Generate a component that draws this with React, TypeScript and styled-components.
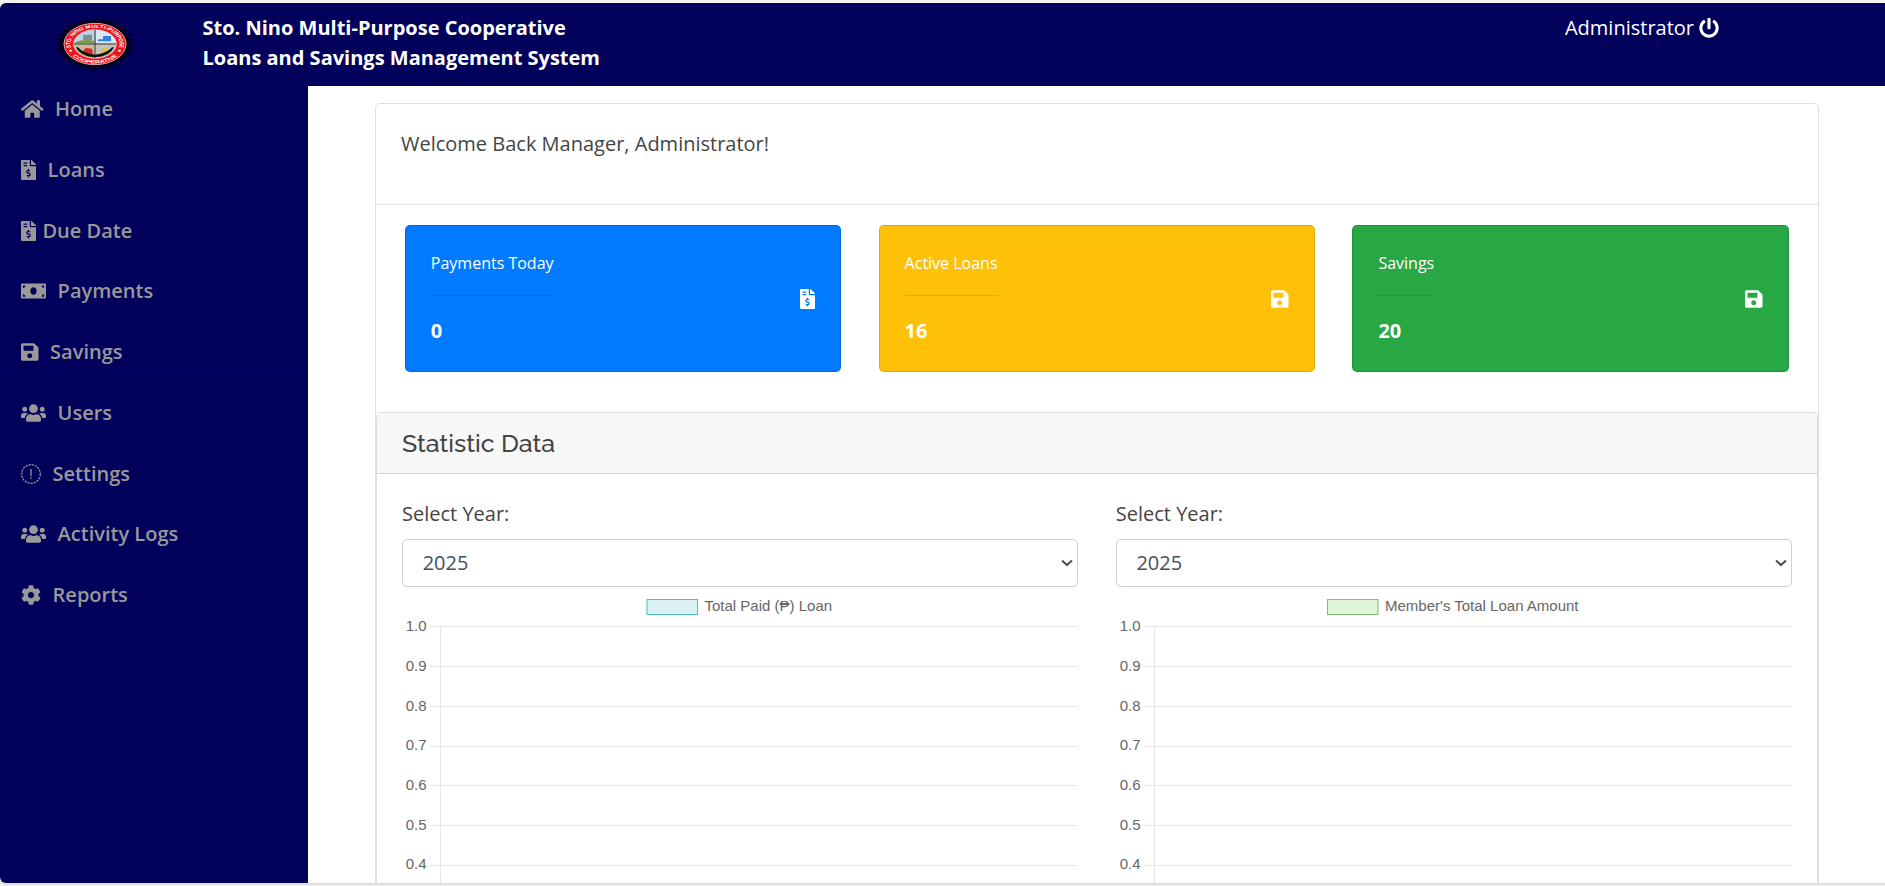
import React from "react";
import styled, { createGlobalStyle } from "styled-components";
import {
  FaHome,
  FaFileInvoiceDollar,
  FaMoneyBill,
  FaSave,
  FaUsers,
  FaCog,
  FaPowerOff,
} from "react-icons/fa";

const GlobalStyle = createGlobalStyle`
  *, *::before, *::after { box-sizing: border-box; }
  body {
    margin: 0;
    background: #f3f3f3;
    color: #444;
    font-family: "Open Sans", sans-serif;
    font-size: 20px;
    line-height: 30px;
  }
`;

const navy = "#01015c";

const Frame = styled.div`
  display: flex;
  height: 886px;
  padding: 3px 0;
  overflow: hidden;
  background: #f3f3f3;
`;

const Window = styled.div`
  display: flex;
  flex-direction: column;
  flex: 1;
  height: 880px;
  overflow: hidden;
  background: #fff;
  border-radius: 6px 0 0 6px;
  box-shadow: 0 1px 1px 1px #dedede;
`;

const TopBar = styled.header`
  display: flex;
  flex: none;
  height: 83px;
  padding-left: 57px;
  background: ${navy};
  color: #fff;
`;

const LogoSlot = styled.div`
  width: 145.5px;
  padding-top: 15px;
`;

const Brand = styled.h1`
  flex: 1;
  margin: 0;
  padding-top: 10px;
  font-size: 20px;
  line-height: 30px;
  font-weight: 700;
`;

const Account = styled.div`
  display: flex;
  align-items: center;
  gap: 5px;
  height: 30px;
  margin: 10px 166px 0 0;
`;

const Body = styled.div`
  display: flex;
  flex: 1;
  min-height: 0;
`;

const Sidebar = styled.nav`
  width: 308px;
  flex: none;
  background: ${navy};
`;

const NavItem = styled.a<{ $gap?: number }>`
  display: flex;
  align-items: center;
  gap: ${(p) => p.$gap ?? 11.6}px;
  height: 60.75px;
  padding-left: 21px;
  border-bottom: 1px solid #000052;
  color: #999;
  font-weight: 600;

  &:first-child { margin-top: -6.7px; }
  &:last-child { border-bottom-color: transparent; }
`;

const Main = styled.main`
  flex: 1;
  padding: 17px 66px 0 67px;
`;

const Panel = styled.section`
  height: 900px;
  border: 1px solid #dfdfdf;
  border-radius: 5px;
`;

const Welcome = styled.div`
  height: 101px;
  padding: 25px 25px 0;
  border-bottom: 1px solid #dfdfdf;
`;

const StatRow = styled.div`
  display: grid;
  grid-template-columns: repeat(3, 1fr);
  gap: 37.5px;
  padding: 20px 29.3px 40px 28.8px;
`;

const StatCard = styled.div<{ $color: string }>`
  display: flex;
  align-items: center;
  justify-content: space-between;
  height: 147px;
  padding: 0 25px;
  border: 1px solid rgba(0, 0, 0, 0.125);
  border-radius: 5px;
  background: ${(p) => p.$color};
  background-clip: border-box;
  color: #fff;
`;

const StatTitle = styled.div`
  padding-bottom: 20px;
  border-bottom: 1px solid rgba(0, 0, 0, 0.1);
  font-size: 16px;
  line-height: 24px;
`;

const StatValue = styled.div`
  padding-top: 20px;
  font-weight: 700;
`;

const StatisticCard = styled.section`
  height: 700px;
  border: 1px solid #dfdfdf;
  border-radius: 5px;
  overflow: hidden;
`;

const StatisticHeader = styled.h2`
  height: 61px;
  margin: 0;
  padding: 15px 25px;
  background: #f7f7f7;
  border-bottom: 1px solid #d6d6d6;
  font-family: Raleway, Lato, sans-serif;
  font-size: 25px;
  line-height: 30px;
  font-weight: 500;
`;

const ChartRow = styled.div`
  display: grid;
  grid-template-columns: 1fr 1fr;
  gap: 37.5px;
  padding: 25px 25px 0;
`;

const FieldLabel = styled.label`
  display: block;
  height: 40px;
`;

const SelectBox = styled.div`
  display: flex;
  align-items: center;
  justify-content: space-between;
  height: 48px;
  padding: 0 4px 0 19.7px;
  border: 1px solid #ced0da;
  border-radius: 5px;
  color: #495057;
`;

const Chart = styled.svg`
  display: block;
  width: 676px;
  height: 300px;
  font-family: "Liberation Sans", Arial, sans-serif;
  font-size: 15px;
  fill: #666;
`;

const DashedAlert = () => (
  <svg width="20" height="20" viewBox="0 0 20 20" fill="none" stroke="currentColor">
    <circle cx="10" cy="10" r="9.3" strokeWidth="1.2" strokeDasharray="2.2 0.95" />
    <path d="M10 5v7.2M10 13.6v1.5" strokeWidth="1.3" />
  </svg>
);

const Chevron = () => (
  <svg width="12" height="8" viewBox="0 0 12 8" fill="none" stroke="#495057" strokeWidth="2">
    <path d="M1 1.5l5 4.6 5-4.6" />
  </svg>
);

const teeth = Array.from({ length: 32 }, (_, i) => (i * 360) / 32);

const Seal = () => (
  <svg width="76" height="52" viewBox="-38 -26 76 52">
    <g transform="scale(1 .667)">
      <circle r="33.6" fill="#030308" />
      {teeth.map((a) => (
        <rect key={a} x="-1.6" y="-38" width="3.2" height="6" fill="#030308" transform={`rotate(${a})`} />
      ))}
      <circle r="31" fill="#f0141c" stroke="#f7dada" strokeWidth="0.9" />
      <circle r="21.4" fill="#c9cfbe" stroke="#f3c9c9" strokeWidth="0.8" />
      <path d="M-21 -1A21 21 0 0 1 -1 -21V-1Z" fill="#b9d3ea" />
      <path d="M-12 -14h9v8h-9Z" fill="#7e8f93" />
      <path d="M-21 -1c4-5 13-6 20-4v4Z" fill="#7f9a4a" />
      <path d="M1 -21A21 21 0 0 1 21 -1H1Z" fill="#dbe8f5" />
      <path d="M3 -7h5v-5h8v8H3Z" fill="#2f7fe0" />
      <path d="M-21 1H-1V21A21 21 0 0 1 -21 1Z" fill="#c6bb94" />
      <path d="M-9 6l6 1 1 8-7 2-4-5Z" fill="#d8262c" />
      <path d="M1 1H21A21 21 0 0 1 1 21Z" fill="#c4c4bc" />
      <path d="M8 6l5 1 3 6-8 2-2-4Z" fill="#dfc040" />
      <path d="M-19 5q4 14 19 15q15-1 19-15l-2 0q-5 9-17 11q-12-2-17-11Z" fill="#101010" />
      <path d="M-21 0H21M0 -21V21" stroke="#151515" strokeWidth="1" />
      <path id="sealTop" d="M-23.3 8A24.6 24.6 0 1 1 23.3 8" fill="none" />
      <path id="sealBottom" d="M-26 13A29 29 0 0 0 26 13" fill="none" />
      <g fill="#fff" fontFamily="Liberation Sans, sans-serif" fontWeight="700" textAnchor="middle">
        <text fontSize="6.2">
          <textPath href="#sealTop" startOffset="50%" textLength="88" lengthAdjust="spacingAndGlyphs">
            STO. NINO MULTI-PURPOSE
          </textPath>
        </text>
        <text fontSize="6.6">
          <textPath href="#sealBottom" startOffset="50%" textLength="52" lengthAdjust="spacingAndGlyphs">
            COOPERATIVE
          </textPath>
        </text>
      </g>
      <circle cx="-24.5" cy="10" r="1.5" fill="#fff" />
      <circle cx="24.5" cy="10" r="1.5" fill="#fff" />
    </g>
  </svg>
);

const HomeIcon = styled(FaHome)`width: 22.5px; height: 20px;`;
const InvoiceIcon = styled(FaFileInvoiceDollar)`width: 15px; height: 20px;`;
const MoneyIcon = styled(FaMoneyBill)`width: 25px; height: 20px;`;
const SaveIcon = styled(FaSave)`width: 17.5px; height: 20px;`;
const UsersIcon = styled(FaUsers)`width: 25px; height: 20px;`;

const navItems = [
  { label: "Home", icon: <HomeIcon /> },
  { label: "Loans", icon: <InvoiceIcon /> },
  { label: "Due Date", icon: <InvoiceIcon />, gap: 6.4 },
  { label: "Payments", icon: <MoneyIcon /> },
  { label: "Savings", icon: <SaveIcon /> },
  { label: "Users", icon: <UsersIcon /> },
  { label: "Settings", icon: <DashedAlert /> },
  { label: "Activity Logs", icon: <UsersIcon /> },
  { label: "Reports", icon: <FaCog size={20} /> },
];

const stats = [
  { title: "Payments Today", value: "0", color: "#007bff", icon: <InvoiceIcon /> },
  { title: "Active Loans", value: "16", color: "#ffc107", icon: <SaveIcon /> },
  { title: "Savings", value: "20", color: "#28a745", icon: <SaveIcon /> },
];

const ticks = [
  { label: "1.0", y: 39.5, textY: 44 },
  { label: "0.9", y: 79.5, textY: 84 },
  { label: "0.8", y: 119.5, textY: 124 },
  { label: "0.7", y: 159.5, textY: 163 },
  { label: "0.6", y: 198.5, textY: 203 },
  { label: "0.5", y: 238.5, textY: 243 },
  { label: "0.4", y: 278.5, textY: 282 },
];

type ChartProps = { legend: string; legendX: number; fill: string; stroke: string };

const YearChart = ({ legend, legendX, fill, stroke }: ChartProps) => (
  <div>
    <FieldLabel>Select Year:</FieldLabel>
    <SelectBox>
      2025
      <Chevron />
    </SelectBox>
    <Chart>
      <rect x={legendX + 0.5} y="12.5" width="50.5" height="15" fill={fill} stroke={stroke} />
      <text x={legendX + 58} y="24">{legend}</text>
      {ticks.map((t) => (
        <g key={t.label}>
          <path d={`M28 ${t.y}H675`} stroke="#e5e5e5" />
          <text x="24.5" y={t.textY} textAnchor="end">{t.label}</text>
        </g>
      ))}
      <path d="M38.5 39V300" stroke="#e5e5e5" />
    </Chart>
  </div>
);

export default function App() {
  return (
    <Frame>
      <GlobalStyle />
      <Window>
        <TopBar>
          <LogoSlot>
            <Seal />
          </LogoSlot>
          <Brand>
            Sto. Nino Multi-Purpose Cooperative
            <br />
            Loans and Savings Management System
          </Brand>
          <Account>
            Administrator <FaPowerOff size={20} />
          </Account>
        </TopBar>
        <Body>
          <Sidebar>
            {navItems.map((item) => (
              <NavItem key={item.label} $gap={item.gap}>
                {item.icon}
                <span>{item.label}</span>
              </NavItem>
            ))}
          </Sidebar>
          <Main>
            <Panel>
              <Welcome>Welcome Back Manager, Administrator!</Welcome>
              <StatRow>
                {stats.map((s) => (
                  <StatCard key={s.title} $color={s.color}>
                    <div>
                      <StatTitle>{s.title}</StatTitle>
                      <StatValue>{s.value}</StatValue>
                    </div>
                    {s.icon}
                  </StatCard>
                ))}
              </StatRow>
              <StatisticCard>
                <StatisticHeader>Statistic Data</StatisticHeader>
                <ChartRow>
                  <YearChart legend="Total Paid (₱) Loan" legendX={244.5} fill="#dbf2f2" stroke="#4bc0c0" />
                  <YearChart legend="Member's Total Loan Amount" legendX={211} fill="#dff2da" stroke="#7fbf70" />
                </ChartRow>
              </StatisticCard>
            </Panel>
          </Main>
        </Body>
      </Window>
    </Frame>
  );
}
